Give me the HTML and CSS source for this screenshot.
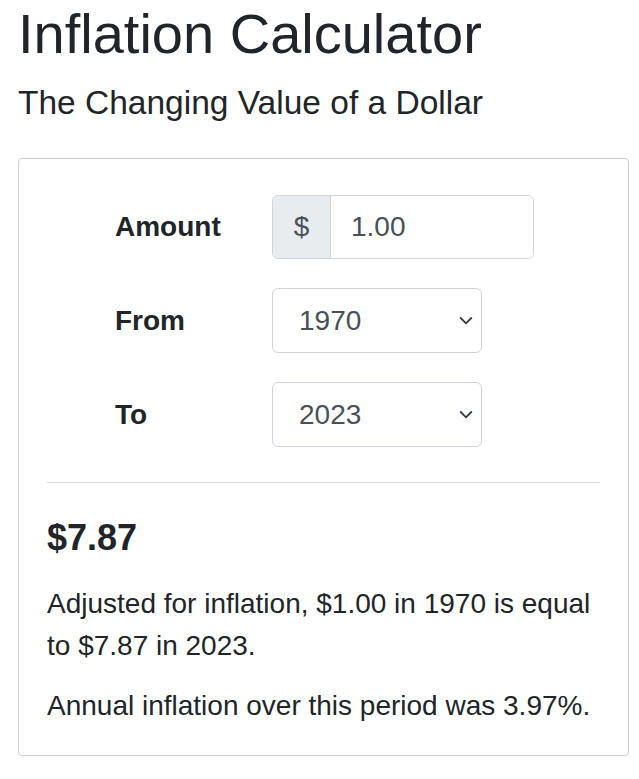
FILE: index.html
```html
<!doctype html>
<html lang="en">
<head>
  <meta charset="UTF-8">
  <title>Inflation Calculator</title>
  <meta name="viewport" content="width=device-width, initial-scale=1.0">
  <link rel="stylesheet" href="styles.css">
</head>
<body>

  <div class="container">
    <h1 class="title">Inflation Calculator</h1>
    <p class="subtitle">The Changing Value of a Dollar</p>

    <div class="card">
      <form class="calc-form">
        <div class="form-row">
          <label class="form-label" for="amount">Amount</label>
          <div class="input-group">
            <span class="input-prefix">$</span>
            <input class="input-field" id="amount" type="text" value="1.00">
          </div>
        </div>

        <div class="form-row">
          <label class="form-label" for="fromYear">From</label>
          <div class="select-wrap">
            <select class="select-field" id="fromYear">
              <option>1970</option>
            </select>
            <svg class="chevron" width="14" height="9" viewBox="0 0 14 9">
              <path d="M1.2 1.5 L7 7.3 L12.8 1.5" fill="none" stroke="#343a40" stroke-width="1.8"/>
            </svg>
          </div>
        </div>

        <div class="form-row">
          <label class="form-label" for="toYear">To</label>
          <div class="select-wrap">
            <select class="select-field" id="toYear">
              <option>2023</option>
            </select>
            <svg class="chevron" width="14" height="9" viewBox="0 0 14 9">
              <path d="M1.2 1.5 L7 7.3 L12.8 1.5" fill="none" stroke="#343a40" stroke-width="1.8"/>
            </svg>
          </div>
        </div>
      </form>

      <hr class="divider">

      <div class="result">
        <h3 class="result-value">$7.87</h3>
        <p>Adjusted for inflation, $1.00 in 1970 is equal to $7.87 in 2023.</p>
        <p>Annual inflation over this period was 3.97%.</p>
      </div>
    </div>
  </div>

</body>
</html>
```

FILE: styles.css
```css
body {
  font-family: "Liberation Sans", Arial, sans-serif;
  margin: 0;
  color: #212529;
  background: #fff;
}
.container {
  padding: 0 10px 0 18px;
}
.title {
  font-size: 56px;
  font-weight: normal;
  line-height: 1.2;
  margin: 0 0 16px;
}
.subtitle {
  font-size: 33.5px;
  line-height: 1.2;
  margin: 0 0 35px;
}

.card {
  border: 1px solid #cfcfcf;
  border-radius: 4px;
  padding: 28px;
}

.calc-form {
  padding-top: 8px;
}
.form-row {
  display: flex;
  align-items: center;
  padding-left: 68px;
  margin-bottom: 29px;
}
.form-row:last-child {
  margin-bottom: 0;
}
.form-label {
  width: 157px;
  font-size: 28px;
  font-weight: bold;
}

.input-group {
  display: flex;
  width: 262px;
  height: 64px;
  border: 1px solid #ced4da;
  border-radius: 6px;
  box-sizing: border-box;
  overflow: hidden;
}
.input-prefix {
  display: flex;
  align-items: center;
  justify-content: center;
  width: 57px;
  background: #e9ecef;
  border-right: 1px solid #ced4da;
  color: #495057;
  font-size: 28px;
}
.input-field {
  flex: 1;
  min-width: 0;
  border: none;
  outline: none;
  padding: 0 20px;
  font-family: inherit;
  font-size: 28px;
  color: #495057;
}

.select-wrap {
  position: relative;
  width: 210px;
  height: 65px;
}
.select-field {
  appearance: none;
  -webkit-appearance: none;
  width: 100%;
  height: 100%;
  border: 1px solid #ced4da;
  border-radius: 6px;
  background: #fff;
  padding: 0 40px 0 26px;
  font-family: inherit;
  font-size: 28px;
  color: #495057;
}
.chevron {
  position: absolute;
  right: 9px;
  top: 28px;
  pointer-events: none;
}

.divider {
  border: 0;
  border-top: 1px solid #dcdcdc;
  margin: 35px 0 33px;
}

.result-value {
  font-size: 36px;
  font-weight: bold;
  line-height: 1.2;
  margin: 0 0 23px;
}
.result p {
  font-size: 28px;
  line-height: 1.5;
  margin: 0 0 18px;
}
.result p:last-child {
  margin-bottom: 0;
}
```
